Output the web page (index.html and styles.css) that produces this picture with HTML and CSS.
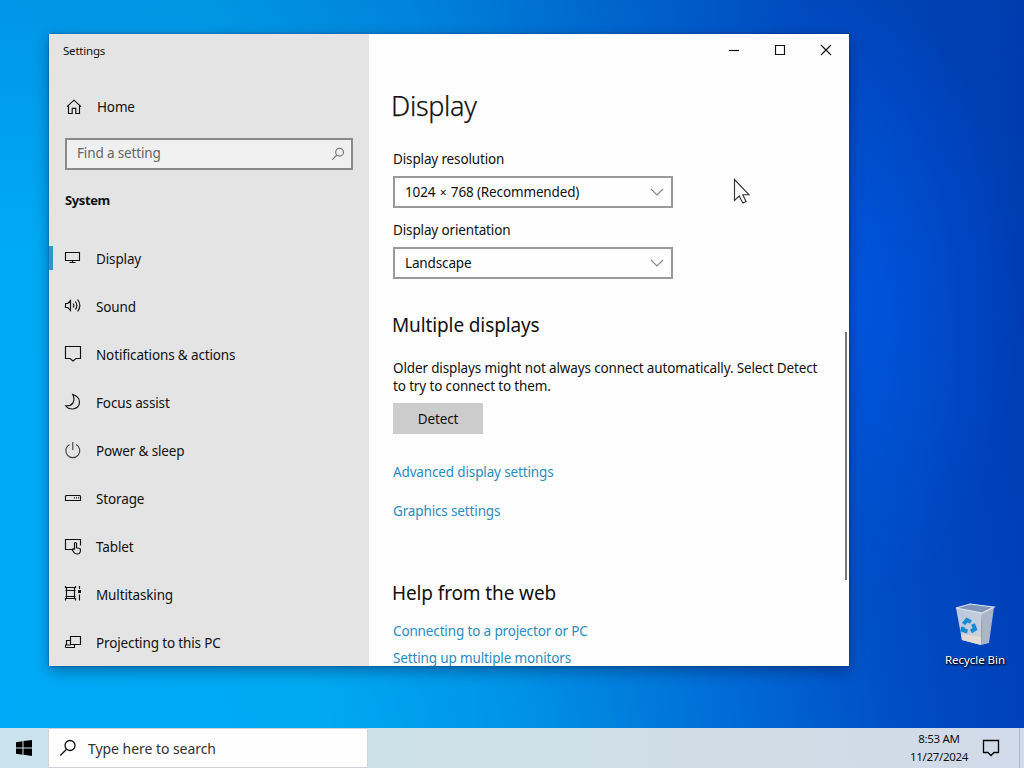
FILE: index.html
```html
<!DOCTYPE html>
<html lang="en">
<head>
<meta charset="utf-8">
<title>Settings</title>
<link rel="stylesheet" href="styles.css">
</head>
<body>
<div class="screen">
  <main class="desktop">
    <section class="window">
      <aside class="sidebar">
        <div class="app-title">Settings</div>
        <div class="home">
          <svg class="icon" viewBox="0 0 18 18"><path d="M2 8.6 9 2.2l7 6.4M3.5 7.6v7.9h3.7v-5.2h3.6v5.2h3.7V7.6"/></svg>
          <span>Home</span>
        </div>
        <div class="find"><span>Find a setting</span>
          <svg class="find-icon" viewBox="0 0 14 14"><circle cx="8.6" cy="5.2" r="3.9"/><path d="M5.8 8 1.2 12.8"/></svg>
        </div>
        <div class="category">System</div>
        <nav class="nav">
          <div class="item current"><svg class="icon" viewBox="0 0 18 18"><path d="M1.5 3.5h14v8h-14zM8.5 11.5v2M5.5 13.5h6"/></svg><span>Display</span></div>
          <div class="item"><svg class="icon" viewBox="0 0 18 18"><path d="M1.5 6.500h2.300L6.500 3.500v10L3.800 10.500H1.500zM9 6.500q1.700 2 0 4M11.300 4.500q3.200 4 0 8M13.600 2.500q4.600 6 0 12"/></svg><span>Sound</span></div>
          <div class="item"><svg class="icon" viewBox="0 0 18 18"><path d="M1.500 1.500h15v12h-4.500l-3 2.500-3-2.500H1.500z"/></svg><span>Notifications &amp; actions</span></div>
          <div class="item"><svg class="icon" viewBox="0 0 18 18"><path d="M8.800 1.500C13 2.800 15.500 5.800 15.500 9.200 15.500 13 12.500 16 8.800 16 5.500 16 3 14.800 1.700 12.700 8.500 13.500 11.800 8 8.800 1.500z"/></svg><span>Focus assist</span></div>
          <div class="item"><svg class="icon" viewBox="0 0 18 18"><path class="dim" d="M8.800 1v8M5.600 3.400a7 7 0 1 0 6.400 0"/></svg><span>Power &amp; sleep</span></div>
          <div class="item"><svg class="icon" viewBox="0 0 18 18"><path d="M1.500 11.500v-4.500l1-.5h13l1 .5v4.500z"/><path d="M10 8.800h1M12 8.800h1M14 8.800h1"/></svg><span>Storage</span></div>
          <div class="item"><svg class="icon" viewBox="0 0 18 18"><path d="M8.500 12.500h-7v-10h15v6M10.500 12.700V6.500q0-1 1-1t1 1v4.200l2.500.5q1.700.3 1.500 2-.3 3.800-3.200 3.800-2.400 0-3.300-1.500l-2-3q1.200-1.300 2.500.2"/></svg><span>Tablet</span></div>
          <div class="item"><svg class="icon" viewBox="0 0 18 18"><path d="M1.500 1v1.500h10V1M2.500 2.500v11M10.500 2.500v11M1.500 5.500h10M1.500 11.500h10M1.500 15.500v-2h10v2M15.500 1v3M15.500 9.500v6"/><path class="solid" d="M14 5h3v3h-3z"/></svg><span>Multitasking</span></div>
          <div class="item"><svg class="icon" viewBox="0 0 18 18"><path d="M6.500 3.500h10v8h-10zM6.500 7.500h-4v4.500M10.500 11.500v3M1.500 14.500v-2.500h5M1.500 14.500h9.500"/></svg><span>Projecting to this PC</span></div>
        </nav>
      </aside>
      <div class="content">
        <div class="controls">
          <svg viewBox="0 0 46 32"><path d="M18 16.500h10"/></svg>
          <svg viewBox="0 0 46 32"><path d="M18.500 11.500h9v9h-9z"/></svg>
          <svg viewBox="0 0 46 32"><path d="m18 11 10 10M28 11 18 21"/></svg>
        </div>
        <h1>Display</h1>
        <label class="l1">Display resolution</label>
        <div class="select"><span>1024 <small>×</small> 768 (Recommended)</span><svg viewBox="0 0 14 8"><path d="m1 1 6 6 6-6"/></svg></div>
        <label class="l2">Display orientation</label>
        <div class="select"><span>Landscape</span><svg viewBox="0 0 14 8"><path d="m1 1 6 6 6-6"/></svg></div>
        <h2 class="h-multi">Multiple displays</h2>
        <p class="note">Older displays might not always connect automatically. Select Detect<br>to try to connect to them.</p>
        <button class="detect">Detect</button>
        <a class="link k1">Advanced display settings</a>
        <a class="link k2">Graphics settings</a>
        <h2 class="h-help">Help from the web</h2>
        <a class="link k3">Connecting to a projector or PC</a>
        <a class="link k4">Setting up multiple monitors</a>
        <div class="scrollbar"></div>
      </div>
    </section>
    <div class="bin">
      <svg viewBox="0 0 44 48">
        <defs>
          <linearGradient id="face" x2="1" y2="1"><stop offset="0" stop-color="#b9c8de"/><stop offset=".6" stop-color="#c4cddb"/><stop offset="1" stop-color="#d9d5d4"/></linearGradient>
        </defs>
        <path d="M3 7 29 11 28 44 9 39z" fill="url(#face)"/>
        <path d="m29 11 12-5-5 36-8 2z" fill="#aab5c8"/>
        <path d="m3 7 14-4 24 3-12 6z" fill="#8195b8" stroke="#dbe6f2" stroke-width="1.200"/>
        <path d="m8 33 20 3v8l-19-5z" fill="#e3dad5"/>
        <g fill="none" stroke="#168bd5" stroke-width="4"><path d="m10.500 23 3.500-4 4 2M20 23l2 5-4 2.500M14.500 30.500 9.500 29l1-3"/></g>
      </svg>
      <span>Recycle Bin</span>
    </div>
    <svg class="pointer" viewBox="0 0 18 27"><path d="M1.500 1.500v21l4.700-4.500 3.600 7 3.300-1.600-3.400-6.700h6.200z"/></svg>
  </main>
  <footer class="taskbar">
    <div class="start"><svg viewBox="0 0 16 16"><path d="M0 2.200 6.500 1.300V7.500H0zM7.500 1.100 16 0v7.500H7.500zM0 8.500h6.500v6.200L0 13.800zM7.500 8.500H16V16l-8.500-1.200z"/></svg></div>
    <div class="search"><svg viewBox="0 0 18 18"><circle cx="11" cy="6.500" r="5"/><path d="M7.500 10.200 1.300 16.500"/></svg><span>Type here to search</span></div>
    <div class="clock"><span class="time">8:53 AM</span><span class="date">11/27/2024</span></div>
    <svg class="action" viewBox="0 0 18 18"><path d="M1.500 1.500h15v12h-4.500l-3 3-3-3H1.500z"/></svg>
    <div class="peek"></div>
  </footer>
</div>
</body>
</html>
```
FILE: styles.css
```css
* { box-sizing: border-box; }
body { margin: 0; font-family: "Noto Sans", "Open Sans", sans-serif; font-size: 13.5px; letter-spacing: -0.14px; color: #111; }
svg { fill: none; stroke: #111; stroke-width: 1.15; flex: none; display: block; }
span, a, h1, h2, label, p { white-space: nowrap; }
.screen { width: 1024px; height: 768px; display: flex; flex-direction: column; overflow: hidden; }
.desktop {
  position: relative; height: 728px;
  background:
    radial-gradient(ellipse 170px 300px at 850px 300px, rgba(0, 92, 240, .6), rgba(0, 80, 220, 0)),
    linear-gradient(180deg, rgba(0, 70, 170, .2), rgba(0, 70, 170, 0) 35%),
    linear-gradient(81deg, #00aaf8 0%, #00aaf2 28%, #0092e6 46%, #006cd6 64%, #004cc4 80%, #0040b8 91%, #003ab0 100%);
}
.window {
  position: absolute; left: 49px; top: 34px; width: 800px; height: 632px;
  display: flex; overflow: hidden; background: #fefefe;
  box-shadow: 0 0 2px rgba(0, 30, 70, .6), 0 5px 14px rgba(0, 20, 60, .4);
}
.sidebar { width: 320px; background: #e4e4e4; }
.app-title { height: 32px; padding-left: 14px; line-height: 34px; font-size: 11.5px; letter-spacing: -0.2px; }
.icon { width: 18px; height: 18px; }
.home { height: 40px; margin-top: 21px; padding-left: 16px; display: flex; align-items: center; gap: 14px; }
.find span { padding-bottom: 2px; }
.find {
  width: 288px; height: 32px; margin: 11px 0 0 16px; padding: 0 6px 0 10px;
  display: flex; align-items: center; justify-content: space-between;
  border: 2px solid #8a8a8a; background: #f0f0f0; color: #666;
}
.find-icon { width: 14px; height: 14px; stroke: #777; }
.category { height: 40px; margin: 10px 0 14px; padding-left: 16px; line-height: 40px; font-size: 13px; font-weight: 700; letter-spacing: -0.4px; }
.item { height: 48px; padding-left: 15px; display: flex; align-items: center; gap: 14px; }
.item span { padding-top: 1px; }
.current { background: linear-gradient(#2f97c4, #2f97c4) 0 12px / 4px 24px no-repeat; }
.dim { stroke: #444; }
.solid { fill: #111; stroke: none; }
.content { position: relative; flex: 1; padding-left: 24px; display: flex; flex-direction: column; align-items: flex-start; }
.content > * { flex-shrink: 0; }
.controls { height: 32px; align-self: flex-end; display: flex; }
.controls svg { width: 46px; height: 32px; }
h1, h2, p { margin: 0; font-weight: 400; }
h1 { margin: 20px 0 0 -2px; height: 40px; line-height: 40px; font-size: 27px; font-weight: 300; letter-spacing: -0.3px; -webkit-text-stroke: .25px #111; }
label { height: 20px; line-height: 20px; }
.l1 { margin: 23px 0 7px; }
.l2 { margin: 12px 0 7px; }
.select {
  width: 280px; height: 32px; padding: 0 7px 0 10px; border: 2px solid #999;
  display: flex; align-items: center; justify-content: space-between;
}
.select svg { width: 14px; height: 8px; stroke: #888; }
small { font-size: 12px; padding: 0 1px; }
h2 { margin-left: -1px; height: 28px; line-height: 28px; font-size: 19px; letter-spacing: -0.12px; }
.h-multi { margin-top: 32px; }
.note { margin-top: 20px; line-height: 18px; }
.detect { width: 90px; height: 31px; margin-top: 8px; padding: 0; border: 0; background: #ccc; color: #111; font: inherit; letter-spacing: inherit; }
.link { height: 20px; line-height: 20px; color: #2a8cc0; }
.k1 { margin-top: 28px; }
.k2 { margin-top: 19px; }
.h-help { margin-top: 58px; }
.k3 { margin-top: 14px; }
.k4 { margin-top: 7px; }
.scrollbar { position: absolute; right: 2px; top: 298px; width: 2px; height: 248px; background: #777; }
.bin {
  position: absolute; left: 935px; top: 601px; width: 80px;
  display: flex; flex-direction: column; align-items: center; gap: 3px;
  color: #fff; font-size: 11.5px; line-height: 16px; letter-spacing: -0.05px; text-shadow: 1px 1px 2px #000, 0 1px 2px #000;
}
.bin svg { width: 44px; height: 48px; stroke: none; }
.pointer { position: absolute; left: 733px; top: 178px; width: 18px; height: 27px; fill: #fff; stroke: #333; }
.taskbar { height: 40px; display: flex; align-items: center; background: linear-gradient(90deg, #cbe3ee, #cde2e8 40%, #d0dce6 70%, #d2dbe9); }
.start { width: 48px; display: flex; padding-left: 16px; }
.start svg { width: 16px; height: 16px; fill: #000; stroke: none; }
.search {
  width: 320px; height: 40px; padding-left: 10px; display: flex; align-items: center; gap: 11px;
  background: #fefefe; border: 1px solid #cdd3d6; color: #333; font-size: 14px; letter-spacing: -0.05px;
}
.search svg { width: 18px; height: 18px; stroke-width: 1.3; }
.clock { margin-left: auto; width: 62px; display: flex; flex-direction: column; align-items: center; font-size: 11.5px; line-height: 18px; letter-spacing: -0.3px; }
.action { width: 18px; height: 18px; margin: 0 19px 0 12px; stroke: #000; stroke-width: 1.3; }
.peek { width: 5px; height: 40px; border-left: 1px solid #aab6c2; }
```
